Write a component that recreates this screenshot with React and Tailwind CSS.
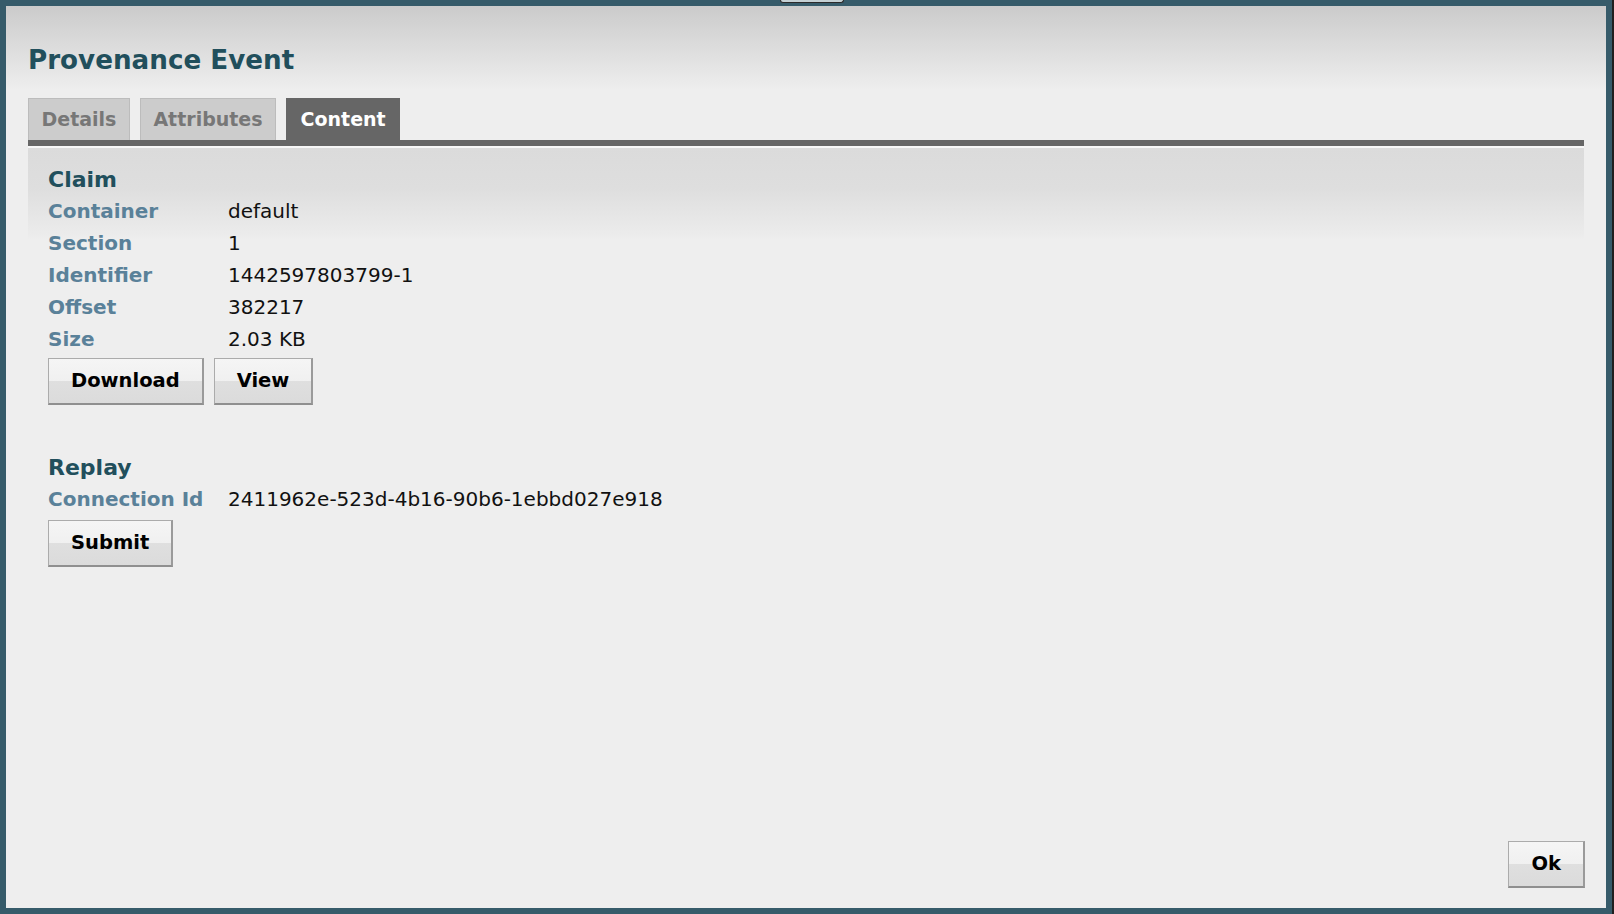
import React from 'react';

const claim = [
  { label: 'Container', value: 'default' },
  { label: 'Section', value: '1' },
  { label: 'Identifier', value: '1442597803799-1' },
  { label: 'Offset', value: '382217' },
  { label: 'Size', value: '2.03 KB' },
];

function Button({ children }) {
  return (
    <button className="h-[47px] px-[22px] flex items-center justify-center text-[19.5px] font-bold text-black border border-[#ababab] border-r-2 border-b-2 border-r-[#9a9a9a] border-b-[#8f8f8f] bg-[linear-gradient(to_bottom,#f5f5f5_0%,#f0f0f0_50%,#dfdfdf_50%,#dbdbdb_100%)]">
      {children}
    </button>
  );
}

function Row({ label, value }) {
  return (
    <div className="flex h-[32px] items-center text-[20px] leading-[32px]">
      <span className="w-[180px] font-bold text-[#5a8199]">{label}</span>
      <span className="text-[#111]">{value}</span>
    </div>
  );
}

function Tab({ label, active }) {
  if (active) {
    return (
      <div className="h-[42px] px-[13.5px] flex items-center bg-[#666666] border border-b-0 border-[#666666] text-[19px] font-bold text-white">
        {label}
      </div>
    );
  }
  return (
    <div className="h-[42px] px-[12.5px] flex items-center bg-[#cccccc] border border-b-0 border-[#bcbcbc] text-[19px] font-bold text-[#777777]">
      {label}
    </div>
  );
}

export default function App() {
  return (
    <div className="relative w-[1614px] h-[914px] flex font-['DejaVu_Sans',Verdana,sans-serif] overflow-hidden">
      <div className="flex-1 flex flex-col border-[6px] border-[#365b6a] bg-[linear-gradient(to_bottom,#cbcbcb_0px,#eeeeee_84px,#eeeeee_100%)] px-[22px]">
        <h1 className="pt-[38px] text-[26.2px] leading-[32px] font-bold text-[#214f5c]">Provenance Event</h1>

        <div className="mt-[22px] flex gap-[10px]">
          <Tab label="Details" />
          <Tab label="Attributes" />
          <Tab label="Content" active />
        </div>
        <div className="h-[6px] bg-[#666666]" />

        <div className="flex-1 border-t-2 border-[#f7f7f7] bg-[linear-gradient(to_bottom,#dbdbdb_0px,#dedede_40px,#ececec_88px,#eeeeee_92px,#eeeeee_100%)] px-[20px] pt-[16px]">
          <h2 className="text-[22px] leading-[31px] font-bold text-[#214f5c]">Claim</h2>
          {claim.map((r) => (
            <Row key={r.label} label={r.label} value={r.value} />
          ))}
          <div className="mt-[3px] flex gap-[10px]">
            <Button>Download</Button>
            <Button>View</Button>
          </div>

          <h2 className="mt-[47px] text-[22px] leading-[31px] font-bold text-[#214f5c]">Replay</h2>
          <Row label="Connection Id" value="2411962e-523d-4b16-90b6-1ebbd027e918" />
          <div className="mt-[5px] flex">
            <Button>Submit</Button>
          </div>
        </div>

        <div className="flex justify-end pb-[20px] -mr-px">
          <Button>Ok</Button>
        </div>
      </div>
      <div className="w-[2px] bg-[#1f1f1f]" />

      <div className="absolute left-[780px] top-0 w-[64px] h-[3px] rounded-b-[6px] border border-t-0 border-[#2a2a2a] bg-[#c4d0d4]" />
    </div>
  );
}
